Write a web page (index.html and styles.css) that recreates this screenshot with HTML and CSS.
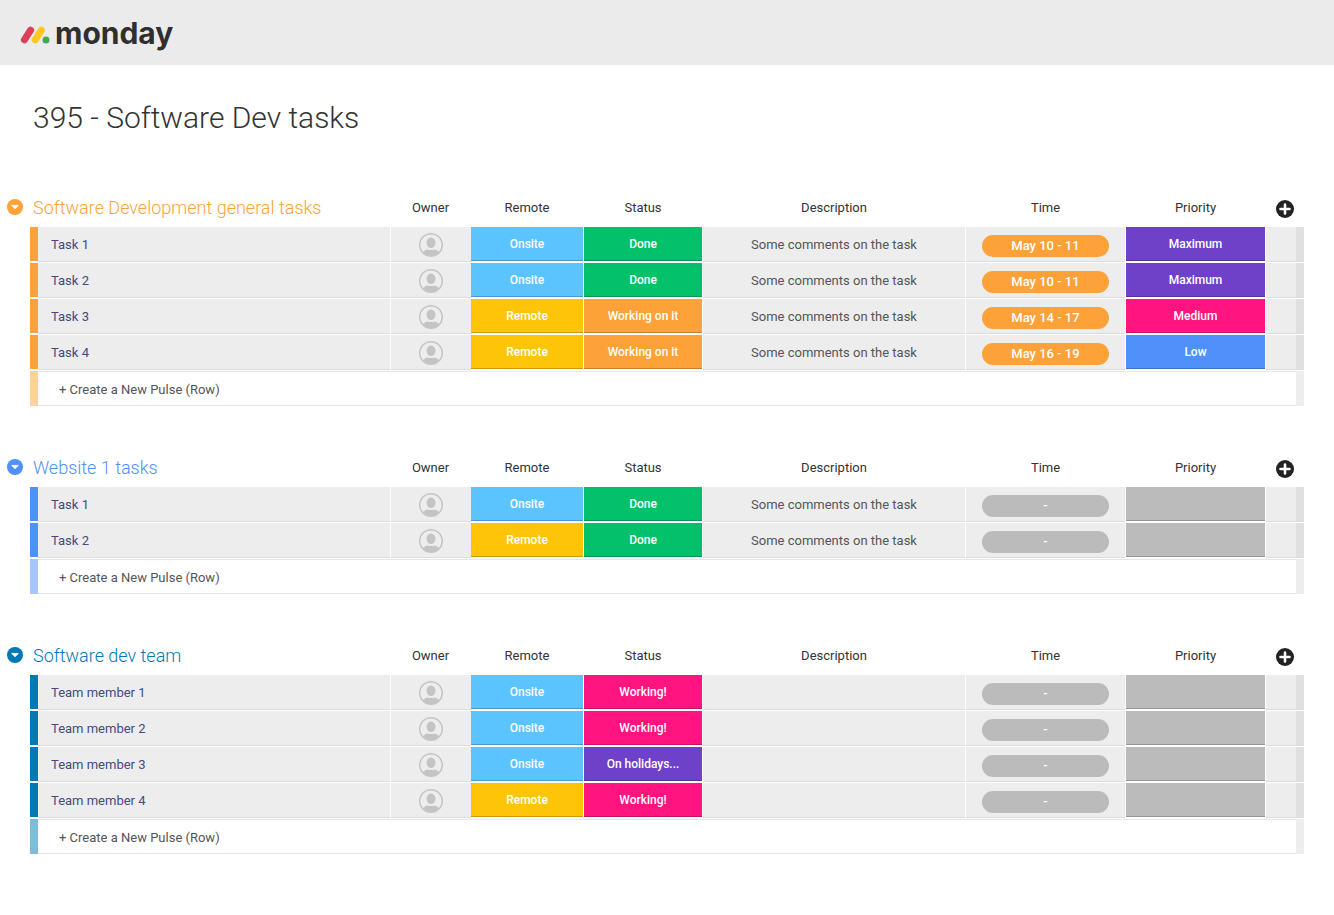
FILE: index.html
```html
<!DOCTYPE html>
<html lang="en">
<head>
    <meta charset="UTF-8">
    <meta name="viewport" content="width=device-width, initial-scale=1.0">
    <title>395 - Software Dev tasks</title>
    <link rel="stylesheet" href="styles.css">
</head>
<body>
    <svg class="sprite" aria-hidden="true">
        <symbol id="icon-arrow" viewBox="0 0 16 16">
            <circle cx="8" cy="8" r="8" fill="currentColor"/>
            <path d="M4.6 6.4h6.8L8 9.8z" fill="#fff" stroke="#fff" stroke-width="0.8" stroke-linejoin="round"/>
        </symbol>
        <symbol id="icon-plus" viewBox="0 0 18 18">
            <circle cx="9" cy="9" r="9" fill="currentColor"/>
            <path d="M9 4.5v9M4.500 9h9" stroke="#fff" stroke-width="2.6" stroke-linecap="round"/>
        </symbol>
        <symbol id="icon-person" viewBox="0 0 24 24">
            <clipPath id="person-clip"><circle cx="12" cy="12" r="11"/></clipPath>
            <circle cx="12" cy="12" r="11.3" fill="none" stroke="currentColor" stroke-width="1.4"/>
            <ellipse cx="12" cy="9.7" rx="4.5" ry="5.2" fill="currentColor"/>
            <path clip-path="url(#person-clip)" d="M3 24c0-5 2-7 5.500-7.600q3.500 1.400 7 0c3.500.6 5.500 2.600 5.500 7.600z" fill="currentColor"/>
        </symbol>
    </svg>

    <header class="topbar">
        <a class="logo" href="index.html">
            <svg class="logo-mark" viewBox="0 0 30 18" aria-hidden="true">
                <path d="M4.400 13.800 10.600 4.200" stroke="#dd3f5b" stroke-width="7" stroke-linecap="round"/>
                <path d="M15.200 13.800 21.400 4.200" stroke="#fbc81b" stroke-width="7" stroke-linecap="round"/>
                <circle cx="26" cy="14" r="3.500" fill="#42a951"/>
            </svg>
            monday
        </a>
    </header>

    <main class="board">
        <h1>395 - Software Dev tasks</h1>
        <div id="groups"></div>
    </main>

    <script src="script.js"></script>
</body>
</html>
```

FILE: styles.css
```css
:root {
    --text-color: #333;
    --name-color: #434a80;
    --cell-bg: #ededed;
    --line-color: #dcdcdc;
    --orange: #fda139;
    --blue: #4f90fa;
    --navy: #0079b5;
    --sky: #5bc4ff;
    --yellow: #fec408;
    --green: #03c06a;
    --purple: #6e41c8;
    --pink: #ff1480;
    --empty: #bbb;
}
* {
    box-sizing: border-box;
}
body {
    margin: 0;
    font-family: Roboto, sans-serif;
    font-size: 13px;
    color: var(--text-color);
    background: white;
}
button {
    display: block;
    padding: 0;
    border: none;
    background: none;
    cursor: pointer;
}
svg {
    display: block;
}
.sprite {
    position: absolute;
    width: 0;
    height: 0;
}

/* top bar */
.topbar {
    display: flex;
    align-items: center;
    height: 65px;
    padding: 0 20px;
    background: #ebebeb;
}
.logo {
    display: flex;
    align-items: center;
    gap: 5px;
    font-family: Inter, sans-serif;
    font-size: 30px;
    font-weight: 700;
    line-height: 36px;
    color: #2f2f2f;
    text-decoration: none;
}
.logo-mark {
    width: 30px;
    height: 18px;
    margin-top: 4px;
    fill: none;
}

/* board */
.board {
    padding: 33px 30px 40px 0;
}
h1 {
    margin: 0 0 49px 33px;
    font-size: 30px;
    font-weight: 300;
    line-height: 40px;
}
.group {
    width: 100%;
    margin-bottom: 41px;
    table-layout: fixed;
    border-collapse: separate;
    border-spacing: 0;
}
.group.orange { color: var(--orange); }
.group.blue { color: var(--blue); }
.group.navy { color: var(--navy); }

.col-toggle { width: 30px; }
.col-bar { width: 8px; }
.col-owner { width: 80px; }
.col-remote { width: 113px; }
.col-status { width: 119px; }
.col-description { width: 263px; }
.col-time { width: 160px; }
.col-priority { width: 140px; }
.col-add { width: 30px; }
.col-end { width: 8px; }

th, td {
    padding: 0;
    text-align: center;
}
thead th {
    height: 40px;
    padding-right: 1px;
    font-weight: 400;
    color: var(--text-color);
}
thead .title {
    padding-left: 3px;
    text-align: left;
    font-size: 18px;
    font-weight: 300;
    color: inherit;
}
.toggle {
    margin-left: 7px;
    color: inherit;
}
thead .toggle-cell {
    color: inherit;
}
.toggle svg {
    width: 16px;
    height: 16px;
}
.add {
    margin: 4px auto 0;
    color: #222;
}
.add svg {
    width: 18px;
    height: 18px;
}

/* rows */
.row th, .row td {
    height: 36px;
    border-bottom: 1px solid white;
    background: var(--cell-bg);
    color: #555;
    box-shadow: inset 0 -1px var(--line-color);
}
.row .spacer, .new .spacer {
    background: none;
    box-shadow: none;
}
.row .bar {
    border-bottom-width: 2px;
    background: currentColor;
    color: inherit;
    box-shadow: none;
}
.row .name {
    padding-left: 13px;
    border-right: 1px solid white;
    text-align: left;
    font-weight: 400;
    color: var(--name-color);
}
.row .owner {
    padding-right: 1px;
}
.person {
    width: 24px;
    height: 24px;
    margin: 0 auto;
    color: #c4c4c4;
}
.row .description, .row .time {
    border-right: 1px solid white;
}
.row .end {
    background: #e0e0e0;
}
.row .label {
    border-right: 1px solid white;
    border-bottom-width: 2px;
    color: white;
    font-size: 12px;
    font-weight: 500;
    box-shadow: inset 0 -1px rgba(0, 0, 0, 0.2);
}
.row .onsite { background: var(--sky); }
.row .remote { background: var(--yellow); }
.row .done { background: var(--green); }
.row .progress { background: var(--orange); }
.row .purple { background: var(--purple); }
.row .pink { background: var(--pink); }
.row .low { background: var(--blue); }
.row .empty { background: var(--empty); }

.pill {
    display: block;
    margin: 3px 16px 0;
    border-radius: 11px;
    background: var(--orange);
    color: white;
    font-weight: 500;
    line-height: 22px;
}
.pill.unset {
    background: var(--empty);
}

/* new row */
.new td {
    height: 35px;
    border-top: 1px solid #e6e6e6;
    border-bottom: 1px solid #e6e6e6;
}
.new .spacer {
    border: none;
}
.new .bar {
    border: none;
    background: currentColor;
    opacity: 0.5;
}
.new .end {
    border-color: var(--cell-bg);
    background: var(--cell-bg);
}
.new input {
    display: block;
    width: 100%;
    height: 33px;
    padding: 2px 0 0 21px;
    border: none;
    outline: none;
    background: none;
    font: inherit;
    color: #555;
}
.new input::placeholder {
    color: #555;
    opacity: 1;
}
```

FILE: script.js
```js
const columns = ["Owner", "Remote", "Status", "Description", "Time", "Priority"];

const labelClass = {
    "Onsite": "onsite",
    "Remote": "remote",
    "Done": "done",
    "Working on it": "progress",
    "Working!": "pink",
    "On holidays...": "purple",
    "Maximum": "purple",
    "Medium": "pink",
    "Low": "low",
    "": "empty"
};

const comment = "Some comments on the task";

// each row: name, remote, status, description, time, priority
const groups = [
    {
        title: "Software Development general tasks",
        color: "orange",
        rows: [
            ["Task 1", "Onsite", "Done", comment, "May 10 - 11", "Maximum"],
            ["Task 2", "Onsite", "Done", comment, "May 10 - 11", "Maximum"],
            ["Task 3", "Remote", "Working on it", comment, "May 14 - 17", "Medium"],
            ["Task 4", "Remote", "Working on it", comment, "May 16 - 19", "Low"]
        ]
    },
    {
        title: "Website 1 tasks",
        color: "blue",
        rows: [
            ["Task 1", "Onsite", "Done", comment, "-", ""],
            ["Task 2", "Remote", "Done", comment, "-", ""]
        ]
    },
    {
        title: "Software dev team",
        color: "navy",
        rows: [
            ["Team member 1", "Onsite", "Working!", "", "-", ""],
            ["Team member 2", "Onsite", "Working!", "", "-", ""],
            ["Team member 3", "Onsite", "On holidays...", "", "-", ""],
            ["Team member 4", "Remote", "Working!", "", "-", ""]
        ]
    }
];

function labelCell(text) {
    return `<td class="label ${labelClass[text]}">${text}</td>`;
}

function rowHtml([name, remote, status, description, time, priority]) {
    return `<tr class="row">
        <td class="spacer"></td>
        <td class="bar"></td>
        <th class="name" scope="row">${name}</th>
        <td class="owner"><svg class="person" role="img" aria-label="No owner"><use href="#icon-person"/></svg></td>
        ${labelCell(remote)}
        ${labelCell(status)}
        <td class="description">${description}</td>
        <td class="time"><span class="pill ${time === "-" ? "unset" : ""}">${time}</span></td>
        ${labelCell(priority)}
        <td></td>
        <td class="end"></td>
    </tr>`;
}

function groupHtml(group) {
    const cols = ["toggle", "bar", "name", "owner", "remote", "status", "description", "time", "priority", "add", "end"];
    return `<table class="group ${group.color}">
        <colgroup>${cols.map(c => `<col class="col-${c}">`).join("")}</colgroup>
        <thead>
            <tr>
                <th class="toggle-cell"><button class="toggle" aria-label="Collapse group"><svg><use href="#icon-arrow"/></svg></button></th>
                <th class="title" colspan="2">${group.title}</th>
                ${columns.map(c => `<th scope="col">${c}</th>`).join("")}
                <th colspan="2"><button class="add" aria-label="Add column"><svg><use href="#icon-plus"/></svg></button></th>
            </tr>
        </thead>
        <tbody>
            ${group.rows.map(rowHtml).join("")}
            <tr class="new">
                <td class="spacer"></td>
                <td class="bar"></td>
                <td colspan="8"><input type="text" aria-label="New pulse" placeholder="+ Create a New Pulse (Row)"></td>
                <td class="end"></td>
            </tr>
        </tbody>
    </table>`;
}

document.getElementById("groups").innerHTML = groups.map(groupHtml).join("");

// collapse / expand a group
document.querySelectorAll(".toggle").forEach(button => {
    button.addEventListener("click", function () {
        const body = button.closest("table").tBodies[0];
        body.hidden = !body.hidden;
    });
});
```
